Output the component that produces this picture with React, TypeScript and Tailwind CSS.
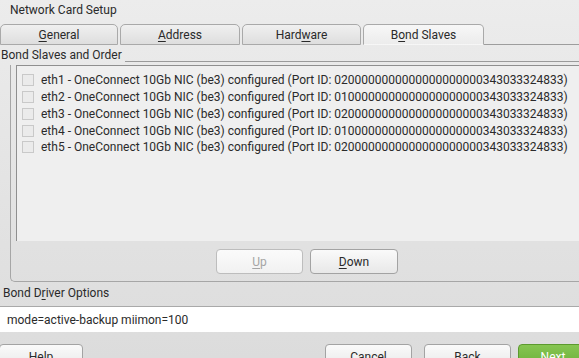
const slaves = [
  { name: "eth1", port: "0200000000000000000000343033324833" },
  { name: "eth2", port: "0100000000000000000000343033324833" },
  { name: "eth3", port: "0200000000000000000000343033324833" },
  { name: "eth4", port: "0100000000000000000000343033324833" },
  { name: "eth5", port: "0200000000000000000000343033324833" },
];

const tabs = [
  { pre: "", key: "G", post: "eneral", w: "w-[118px]" },
  { pre: "", key: "A", post: "ddress", w: "w-[120px]" },
  { pre: "Hard", key: "w", post: "are", w: "w-[119px]" },
  { pre: "B", key: "o", post: "nd Slaves", w: "w-[121px]", active: true },
];

function Tab({ t }: { t: (typeof tabs)[number] }) {
  return (
    <div
      className={
        "flex h-[21px] items-center justify-center rounded-t-[5px] border border-[#a9a9a9] " +
        t.w +
        (t.active
          ? " border-b-transparent bg-gradient-to-b from-[#f7f7f7] to-[#ececec]"
          : " bg-gradient-to-b from-[#f0f0f0] to-[#dedede]")
      }
    >
      <span>
        {t.pre}
        <u className="underline-offset-2">{t.key}</u>
        {t.post}
      </span>
    </div>
  );
}

function Button({
  children,
  className = "",
}: {
  children: React.ReactNode;
  className?: string;
}) {
  return (
    <div
      className={
        "flex h-[25px] shrink-0 items-center justify-center rounded-[4px] border border-[#a3a3a3] bg-gradient-to-b from-[#fafafa] to-[#e8e8e8] " +
        className
      }
    >
      {children}
    </div>
  );
}

export default function App() {
  return (
    <div
      className="h-[358px] w-[579px] overflow-hidden bg-gradient-to-b from-[#ececec] to-[#dcdcdc] text-[12px] text-[#2a2a2a]"
      style={{ fontFamily: "Roboto, 'Liberation Sans', sans-serif" }}
    >
      <div className="h-[24px] pl-[10px] pt-[3px] leading-[15px]">Network Card Setup</div>

      <div className="flex items-end">
        <div className="flex gap-[2px]">
          {tabs.map((t) => (
            <Tab key={t.key + t.post} t={t} />
          ))}
        </div>
        <div className="h-[21px] flex-1 border-b border-[#9d9d9d]" />
      </div>

      <div className="flex h-[18px] items-end">
        <span className="pl-[1px] leading-[15px]">Bond Slaves and Order</span>
        <div className="mb-[1px] ml-[3px] flex-1 border-b border-[#9a9a9a]" />
      </div>

      <div className="ml-[10px] h-[217px] rounded-bl-[5px] border-b border-l border-[#a6a6a6]">
        <div className="ml-[5px] mt-[2px] h-[176px] border-l border-t border-[#8f8f8f] bg-[#efefef] pl-[5px] pt-[6px]">
          {slaves.map((s) => (
            <div key={s.name} className="flex h-[16.75px] items-center gap-[7px]">
              <div className="h-[12px] w-[12px] shrink-0 border border-[#c9c9c9] bg-[#ebebeb]" />
              <span className="whitespace-nowrap">
                {s.name} - OneConnect 10Gb NIC (be3) configured (Port ID: {s.port})
              </span>
            </div>
          ))}
        </div>
        <div className="mt-[8px] flex gap-[7px] pl-[205px]">
          <Button className="w-[87px] border-[#bdbdbd] from-[#fbfbfb] to-[#f1f1f1] text-[#a5a5a5]">
            <span>
              <u className="underline-offset-2">U</u>p
            </span>
          </Button>
          <Button className="w-[88px]">
            <span>
              <u className="underline-offset-2">D</u>own
            </span>
          </Button>
        </div>
      </div>

      <div className="pl-[3px] pt-[4px] leading-[15px]">
        Bond D<u className="underline-offset-2">r</u>iver Options
      </div>
      <div className="mt-[5px] flex h-[26px] items-center border-t border-[#a9a9a9] bg-white pl-[7px]">
        mode=active-backup miimon=100
      </div>

      <div className="mt-[12px] flex w-[588px]">
        <Button className="w-[84px] -ml-[1px]">Help</Button>
        <div className="flex-1" />
        <Button className="w-[87px]">Cancel</Button>
        <Button className="ml-[12px] w-[87px]">Back</Button>
        <div className="ml-[7px] flex h-[25px] w-[70px] shrink-0 items-center justify-center rounded-[4px] border border-[#5c9a2e] bg-gradient-to-b from-[#86c551] to-[#6aaf37] text-white">
          Next
        </div>
      </div>
    </div>
  );
}
